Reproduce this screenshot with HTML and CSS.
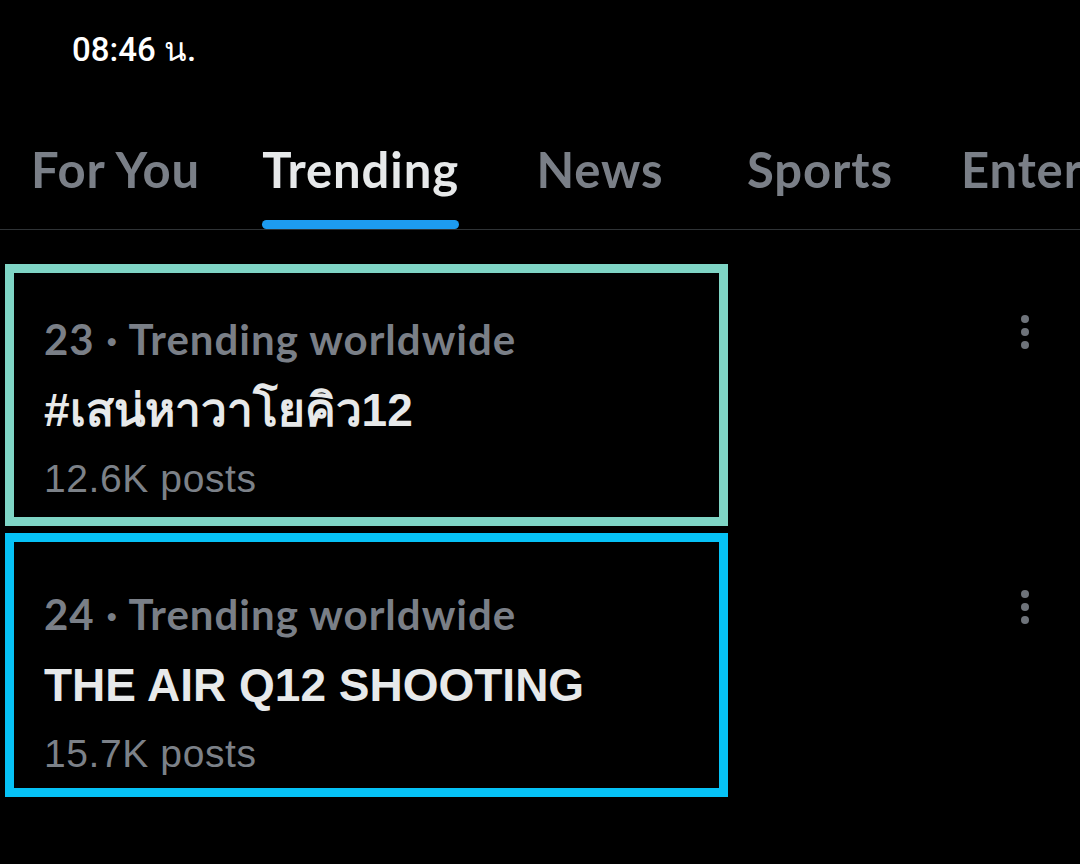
FILE: index.html
```html
<!DOCTYPE html>
<html lang="th">
<head>
    <meta charset="UTF-8">
    <meta name="viewport" content="width=device-width, initial-scale=1.0">
    <title>Trending</title>
    <link rel="stylesheet" href="styles.css">
</head>
<body>

    <!-- Status bar -->
    <div class="status-bar">
        <span class="clock">08:46 น.</span>
    </div>

    <!-- Explore tabs -->
    <nav class="tabs">
        <a class="tab" href="#">
            <span class="tab-label">For You</span>
        </a>
        <a class="tab active" href="#">
            <span class="tab-label">Trending<span class="tab-indicator"></span></span>
        </a>
        <a class="tab" href="#">
            <span class="tab-label">News</span>
        </a>
        <a class="tab" href="#">
            <span class="tab-label">Sports</span>
        </a>
        <a class="tab" href="#">
            <span class="tab-label">Enter</span>
        </a>
    </nav>

    <!-- Trend list -->
    <div class="trend-list">
        <div class="trend trend-first">
            <div class="trend-box">
                <div class="trend-meta">23 · Trending worldwide</div>
                <div class="trend-title trend-title-th">#เสน่หาวาโยคิว12</div>
                <div class="trend-count">12.6K posts</div>
            </div>
            <button class="trend-more" aria-label="More">
                <svg width="8" height="34" viewBox="0 0 8 34"><circle cx="4" cy="4" r="4"/><circle cx="4" cy="17" r="4"/><circle cx="4" cy="30" r="4"/></svg>
            </button>
        </div>

        <div class="trend trend-second">
            <div class="trend-box">
                <div class="trend-meta">24 · Trending worldwide</div>
                <div class="trend-title">THE AIR Q12 SHOOTING</div>
                <div class="trend-count">15.7K posts</div>
            </div>
            <button class="trend-more" aria-label="More">
                <svg width="8" height="34" viewBox="0 0 8 34"><circle cx="4" cy="4" r="4"/><circle cx="4" cy="17" r="4"/><circle cx="4" cy="30" r="4"/></svg>
            </button>
        </div>
    </div>

</body>
</html>
```

FILE: styles.css
```css
/* General Styles */
body {
    margin: 0;
    background-color: #000;
    color: #e7e9ea;
    font-family: Roboto, "Noto Sans", "DejaVu Sans", sans-serif;
    width: 1080px;
    height: 864px;
    overflow: hidden;
}

/* Status bar */
.status-bar {
    padding: 30px 0 0 72px;
}

.clock {
    display: block;
    font-size: 33px;
    line-height: 40px;
    font-weight: 500;
    color: #fff;
}

/* Tabs */
.tabs {
    display: flex;
    margin-top: 69px;
    border-bottom: 1px solid #2f3336;
    white-space: nowrap;
}

.tab {
    flex: none;
    display: flex;
    justify-content: center;
    min-width: 220px;
    padding: 0 31px;
    box-sizing: border-box;
    text-decoration: none;
    color: #7a7f87;
    font-family: Lato, Roboto, sans-serif;
    font-size: 49px;
    font-weight: 700;
    letter-spacing: 0.9px;
}

.tab:last-child {
    min-width: 0;
    padding-right: 0;
}

.tab-label {
    display: flex;
    flex-direction: column;
    align-items: stretch;
    line-height: 60px;
    padding-bottom: 30px;
}

.tab.active {
    color: #e7e9ea;
}

.tab.active .tab-label {
    padding-bottom: 0;
}

.tab-indicator {
    display: block;
    height: 9px;
    margin-top: 21px;
    border-radius: 5px;
    background-color: #1d9bf0;
}

/* Trend rows */
.trend-list {
    display: flex;
    flex-direction: column;
    gap: 7px;
    margin-top: 34px;
    padding-left: 5px;
}

.trend {
    display: flex;
    align-items: flex-start;
}

.trend-first {
    --pad-top: 43px;
    --pad-bottom: 15px;
    --frame: #7fd5c5;
}

.trend-second {
    --pad-top: 49px;
    --pad-bottom: 11px;
    --frame: #06c2f6;
}

.trend-box {
    width: 723px;
    box-sizing: border-box;
    border: 9px solid var(--frame);
    padding: var(--pad-top) 0 var(--pad-bottom) 30px;
    display: flex;
    flex-direction: column;
}

.trend-meta {
    font-family: Lato, Roboto, sans-serif;
    font-size: 42px;
    line-height: 46px;
    font-weight: 700;
    color: #7a7f87;
    letter-spacing: 1px;
}

.trend-title {
    margin-top: 21px;
    font-family: "Liberation Sans", Roboto, sans-serif;
    font-size: 46px;
    line-height: 54px;
    font-weight: 700;
    color: #e7e9ea;
}

.trend-title-th {
    font-size: 46px;
}

.trend-count {
    margin-top: 19px;
    font-family: "Liberation Sans", Roboto, sans-serif;
    font-size: 39px;
    line-height: 46px;
    color: #7c8188;
    letter-spacing: 0.6px;
}

.trend-more {
    margin: calc(var(--pad-top) + 8px) 51px 0 auto;
    padding: 0;
    border: none;
    background: none;
    fill: #6e737a;
    line-height: 0;
}
```
